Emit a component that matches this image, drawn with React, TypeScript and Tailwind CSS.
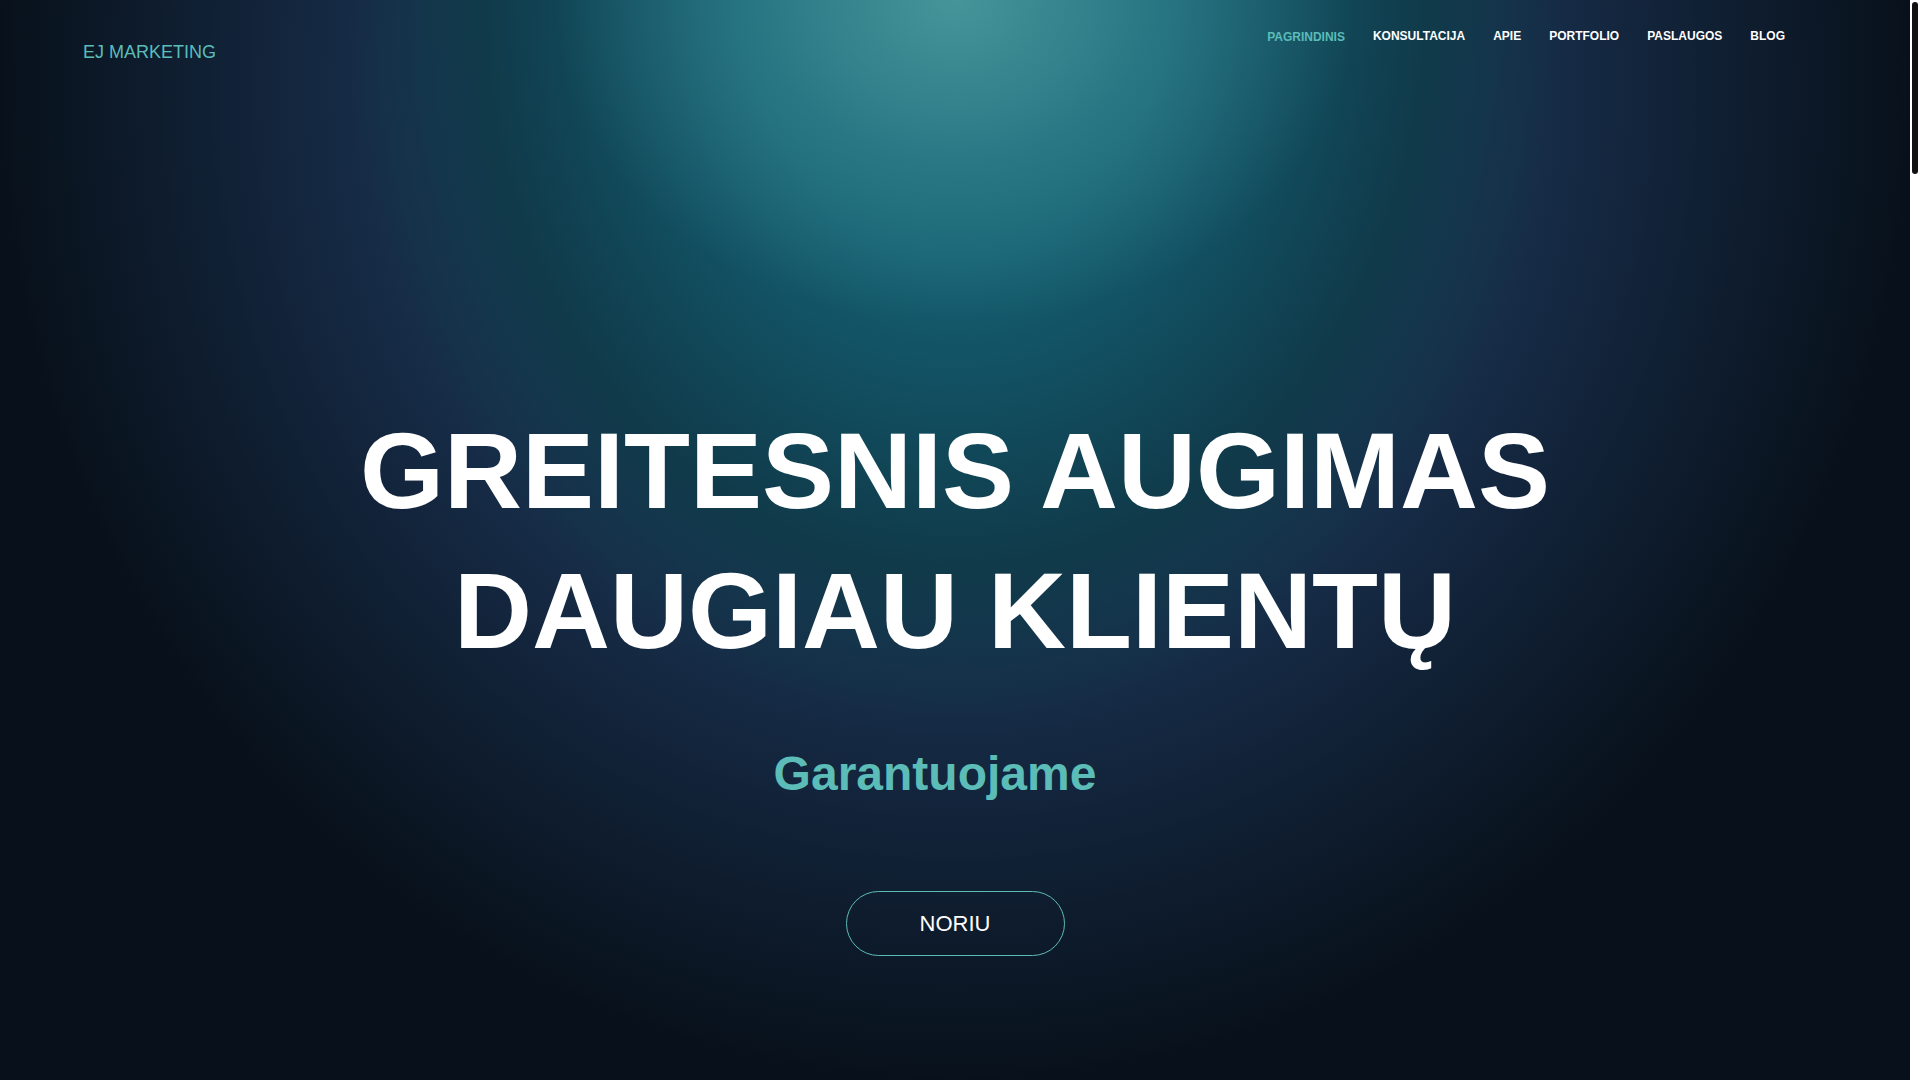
import React from "react";

const navItems = [
  { label: "PAGRINDINIS", active: true },
  { label: "KONSULTACIJA", active: false },
  { label: "APIE", active: false },
  { label: "PORTFOLIO", active: false },
  { label: "PASLAUGOS", active: false },
  { label: "BLOG", active: false },
];

function Header() {
  return (
    <header className="flex items-start justify-between pt-[30px] pl-[83px] pr-[125px]">
      <a href="#" className="mt-[13px] text-[18px] leading-none text-[#5bbcb8]">
        EJ MARKETING
      </a>
      <nav className="flex items-start gap-[28px]">
        {navItems.map((item) => (
          <a
            key={item.label}
            href="#"
            className={
              item.active
                ? "mt-[1px] text-[12px] font-bold leading-none text-[#5bbcb8]"
                : "text-[12px] font-bold leading-none text-white"
            }
          >
            {item.label}
          </a>
        ))}
      </nav>
    </header>
  );
}

function Hero() {
  return (
    <section className="h-screen bg-[#08111b] bg-[radial-gradient(ellipse_21%_30%_at_50%_0%,rgba(80,160,162,0.8)_0%,rgba(80,160,162,0.35)_50%,rgba(80,160,162,0)_100%),radial-gradient(ellipse_32%_68%_at_50%_0%,#176779_0%,#145f72_35%,#114b5c_58%,rgba(15,58,72,0.9)_78%,rgba(15,58,72,0)_100%),radial-gradient(ellipse_50%_92%_at_50%_8%,#1c3657_0%,#1b3455_50%,rgba(27,52,85,0)_100%)]">
      <Header />
      <div className="flex flex-col items-center">
        <h1 className="mt-[340px] text-center text-[108px] font-bold leading-[1.3] text-white">
          GREITESNIS AUGIMAS
          <br />
          DAUGIAU KLIENTŲ
        </h1>
        <p className="mt-[68px] mr-[40px] text-[48px] font-bold leading-none text-[#5bbcb8]">
          Garantuojame
        </p>
        <button className="mt-[93px] h-[65px] w-[219px] rounded-full border border-[#5bbcb8] text-[22px] text-white">
          NORIU
        </button>
      </div>
    </section>
  );
}

function ScrollBar() {
  return (
    <div className="w-[10px] shrink-0 bg-white">
      <div className="mx-[2px] mt-[2px] h-[172px] rounded-[3px] bg-[#111]" />
    </div>
  );
}

export default function App() {
  return (
    <div className="flex h-screen overflow-hidden font-['Liberation_Sans',Arial,sans-serif]">
      <main className="flex-1">
        <Hero />
      </main>
      <ScrollBar />
    </div>
  );
}
